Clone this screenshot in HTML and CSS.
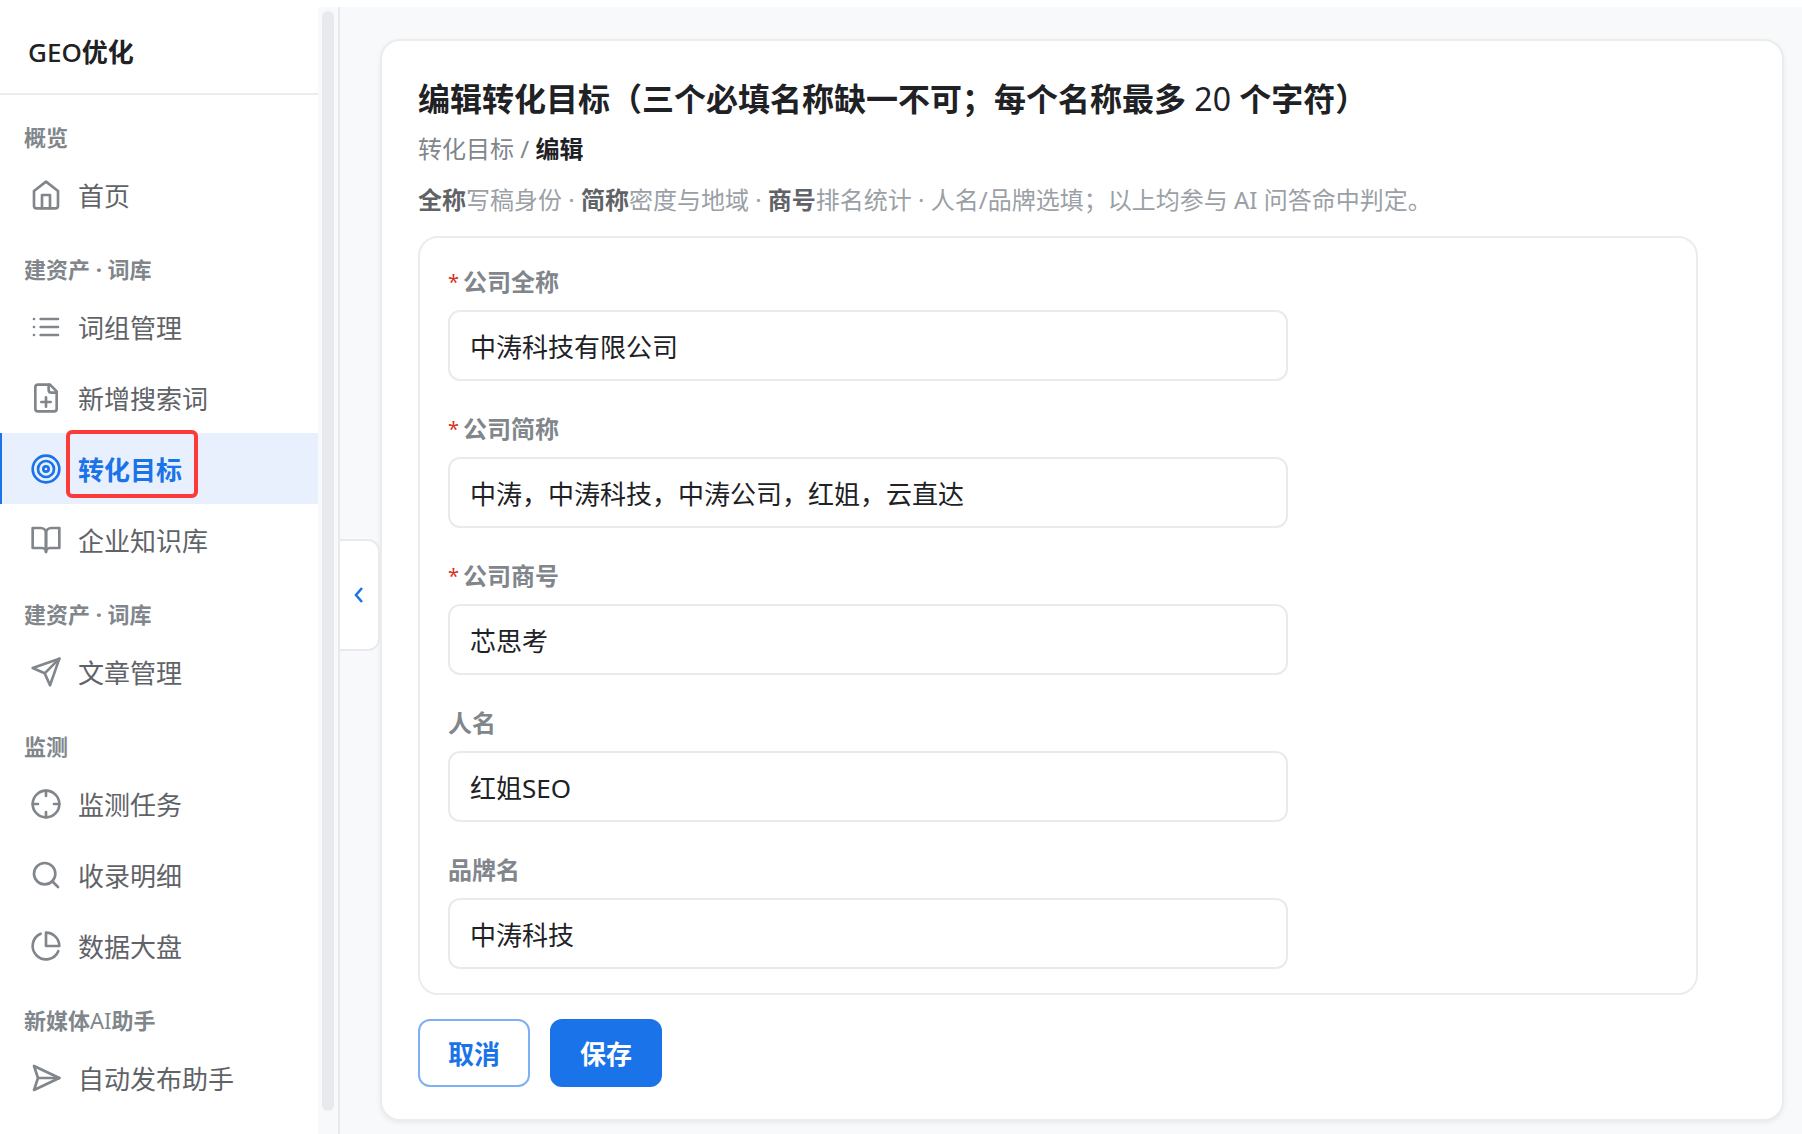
FILE: index.html
```
<!doctype html>
<html lang="zh-CN">

<head>
  <meta charset="utf-8">
  <title>GEO优化 - 编辑转化目标</title>
  <meta name="viewport" content="width=device-width, initial-scale=1">
  <link rel="stylesheet" href="styles.css">
</head>

<body>

<div class="app">
  <aside class="sidebar">
    <div class="menu">
      <div class="brand"><span class="latin">GEO</span>优化</div>
      <nav class="nav">
        <div class="nav-title">概览</div>
        <a class="nav-item" href="#">
          <svg class="icon" viewBox="0 0 24 24"><path d="M3 9l9-7 9 7v11a2 2 0 0 1-2 2H5a2 2 0 0 1-2-2z"/><path d="M9 22V12h6v10"/></svg>
          <span>首页</span>
        </a>

        <div class="nav-title">建资产 · 词库</div>
        <a class="nav-item" href="#">
          <svg class="icon" viewBox="0 0 24 24"><path d="M8 6h13M8 12h13M8 18h13M3 6h.01M3 12h.01M3 18h.01"/></svg>
          <span>词组管理</span>
        </a>
        <a class="nav-item" href="#">
          <svg class="icon" viewBox="0 0 24 24"><path d="M15 2H6a2 2 0 0 0-2 2v16a2 2 0 0 0 2 2h12a2 2 0 0 0 2-2V7z"/><path d="M14 2v4a2 2 0 0 0 2 2h4M12 11.500v7M8.500 15h7"/></svg>
          <span>新增搜索词</span>
        </a>
        <a class="nav-item active" href="#">
          <svg class="icon" viewBox="0 0 24 24"><circle cx="12" cy="12" r="10"/><circle cx="12" cy="12" r="6"/><circle cx="12" cy="12" r="2"/></svg>
          <span>转化目标</span>
          <span class="mark"></span>
        </a>
        <a class="nav-item" href="#">
          <svg class="icon" viewBox="0 0 24 24"><path d="M2 3h6a4 4 0 0 1 4 4v14a3 3 0 0 0-3-3H2z"/><path d="M22 3h-6a4 4 0 0 0-4 4v14a3 3 0 0 1 3-3h7z"/></svg>
          <span>企业知识库</span>
        </a>

        <div class="nav-title">建资产 · 词库</div>
        <a class="nav-item" href="#">
          <svg class="icon" viewBox="0 0 24 24"><path d="M22 2L11 13"/><path d="M22 2l-7 20-4-9-9-4z"/></svg>
          <span>文章管理</span>
        </a>

        <div class="nav-title">监测</div>
        <a class="nav-item" href="#">
          <svg class="icon" viewBox="0 0 24 24"><circle cx="12" cy="12" r="10"/><path d="M22 12h-4M6 12H2M12 6V2M12 22v-4"/></svg>
          <span>监测任务</span>
        </a>
        <a class="nav-item" href="#">
          <svg class="icon" viewBox="0 0 24 24"><circle cx="11" cy="11" r="8"/><path d="M21 21l-4.350-4.350"/></svg>
          <span>收录明细</span>
        </a>
        <a class="nav-item" href="#">
          <svg class="icon" viewBox="0 0 24 24"><path d="M21.210 15.890A10 10 0 1 1 8 2.830"/><path d="M22 12A10 10 0 0 0 12 2v10z"/></svg>
          <span>数据大盘</span>
        </a>

        <div class="nav-title">新媒体<span class="latin">AI</span>助手</div>
        <a class="nav-item" href="#">
          <svg class="icon" viewBox="0 0 24 24"><path d="M3 3l3 9-3 9 19-9z"/><path d="M6 12h16"/></svg>
          <span>自动发布助手</span>
        </a>
        <a class="nav-item" href="#" aria-label="更多">
          <svg class="icon" viewBox="0 0 24 24"><circle cx="12" cy="12" r="10"/></svg>
        </a>
      </nav>
    </div>
    <div class="scroll"><div class="thumb"></div></div>
  </aside>

  <main class="main">
    <button class="toggle" type="button" aria-label="收起菜单">
      <svg viewBox="0 0 10 16"><path d="M8 1L2 8l6 7"/></svg>
    </button>

    <form class="card">
      <h1>编辑转化目标（三个必填名称缺一不可；每个名称最多 <span class="latin">20</span> 个字符）</h1>
      <div class="crumb"><a href="#">转化目标</a> / <b>编辑</b></div>
      <p class="tip"><b>全称</b>写稿身份 · <b>简称</b>密度与地域 · <b>商号</b>排名统计 · 人名/品牌选填；以上均参与 AI 问答命中判定。</p>

      <div class="panel">
        <div class="field">
          <label for="full"><span class="req">*</span>公司全称</label>
          <input type="text" id="full" value="中涛科技有限公司">
        </div>
        <div class="field">
          <label for="short"><span class="req">*</span>公司简称</label>
          <input type="text" id="short" value="中涛，中涛科技，中涛公司，红姐，云直达">
        </div>
        <div class="field">
          <label for="trade"><span class="req">*</span>公司商号</label>
          <input type="text" id="trade" value="芯思考">
        </div>
        <div class="field">
          <label for="person">人名</label>
          <input type="text" id="person" value="红姐SEO">
        </div>
        <div class="field">
          <label for="brand">品牌名</label>
          <input type="text" id="brand" value="中涛科技">
        </div>
      </div>

      <div class="actions">
        <button class="btn" type="button">取消</button>
        <button class="btn primary" type="submit">保存</button>
      </div>
    </form>
  </main>
</div>

</body>

</html>
```

FILE: styles.css
```
*{
    box-sizing: border-box;
}
body{
    margin: 0;
    padding-top: 7px;
    height: 100vh;
    overflow: hidden;
    background: #fff;
    color: #202124;
    font-family: "Noto Sans", "Noto Sans CJK SC", sans-serif;
    font-size: 26px;
}
a{
    color: inherit;
    text-decoration: none;
}
.latin{
    font-weight: 400;
}
.app{
    display: flex;
    height: 100%;
}

/* sidebar */
.sidebar{
    display: flex;
    flex: 0 0 340px;
    border-right: 2px solid #e8eaed;
}
.menu{
    flex: 1;
    overflow: hidden;
}
.brand{
    height: 88px;
    padding: 0 28px;
    border-bottom: 2px solid #ececec;
    font-weight: bold;
    line-height: 90px;
}
.brand .latin{
    font-weight: 500;
}
.nav{
    padding-top: 3px;
}
.nav-title{
    padding: 23px 24px 6px;
    color: #80868b;
    font-size: 22px;
    font-weight: bold;
    line-height: 32px;
}
.nav-item{
    position: relative;
    display: flex;
    align-items: center;
    gap: 16px;
    height: 71px;
    padding-left: 28px;
    border-left: 2px solid transparent;
    color: #5f6368;
}
.nav-item.active{
    border-left-color: #1a73e8;
    background: #e8f0fe;
    color: #1a73e8;
    font-weight: bold;
}
.icon{
    width: 32px;
    height: 32px;
    fill: none;
    stroke: #80868b;
    stroke-width: 2;
    stroke-linecap: round;
    stroke-linejoin: round;
}
.active .icon{
    stroke: #1a73e8;
}
.mark{
    position: absolute;
    top: -3px;
    left: 64px;
    width: 132px;
    height: 68px;
    border: 4px solid #fc3a3a;
    border-radius: 6px;
}
.scroll{
    width: 20px;
    padding: 4px 4px 23px;
    background: #f8f9fb;
}
.thumb{
    height: 100%;
    border-radius: 6px;
    background: #e8eaed;
}

/* content */
.main{
    position: relative;
    flex: 1;
    min-width: 0;
    padding: 32px 18px 0 40px;
    background: #f8f9fb;
}
.toggle{
    position: absolute;
    top: 532px;
    left: 0;
    width: 40px;
    height: 112px;
    padding: 0;
    border: 2px solid #e8eaed;
    border-left: 0;
    border-radius: 0 12px 12px 0;
    background: #fff;
}
.toggle svg{
    display: block;
    width: 10px;
    height: 16px;
    margin: 0 auto;
    fill: none;
    stroke: #1a73e8;
    stroke-width: 2.5;
}
.card{
    padding: 32px 36px;
    border: 2px solid #ececec;
    border-radius: 20px;
    background: #fff;
    box-shadow: 0 2px 4px rgba(60, 64, 67, 0.08);
}
h1{
    margin: 0;
    font-size: 32px;
    line-height: 52px;
}
.crumb{
    margin-top: 4px;
    color: #80868b;
    font-size: 24px;
    line-height: 40px;
}
.crumb b{
    color: #202124;
}
.tip{
    margin: 11px 0 16px;
    color: #9aa0a6;
    font-size: 24px;
    line-height: 40px;
}
.tip b{
    color: #5f6368;
}
.panel{
    max-width: 1280px;
    padding: 24px 28px;
    border: 2px solid #ececec;
    border-radius: 20px;
}
.field{
    max-width: 840px;
}
.field + .field{
    margin-top: 28px;
}
.field label{
    display: block;
    margin-bottom: 8px;
    color: #80868b;
    font-size: 24px;
    font-weight: bold;
    line-height: 40px;
}
.req{
    margin-right: 4px;
    color: #d93025;
    font-size: 20px;
    font-weight: 400;
    line-height: 1;
    vertical-align: 2px;
}
.field input{
    display: block;
    width: 100%;
    height: 71px;
    padding: 0 20px;
    border: 2px solid #e8eaed;
    border-radius: 12px;
    background: #fff;
    color: #202124;
    font: inherit;
}
.actions{
    display: flex;
    gap: 20px;
    margin-top: 24px;
}
.btn{
    width: 112px;
    height: 68px;
    padding: 0;
    border: 2px solid #7fb0f5;
    border-radius: 12px;
    background: #fff;
    color: #1a73e8;
    font: inherit;
    font-weight: bold;
}
.btn.primary{
    border-color: #1a73e8;
    background: #1a73e8;
    color: #fff;
}
```
